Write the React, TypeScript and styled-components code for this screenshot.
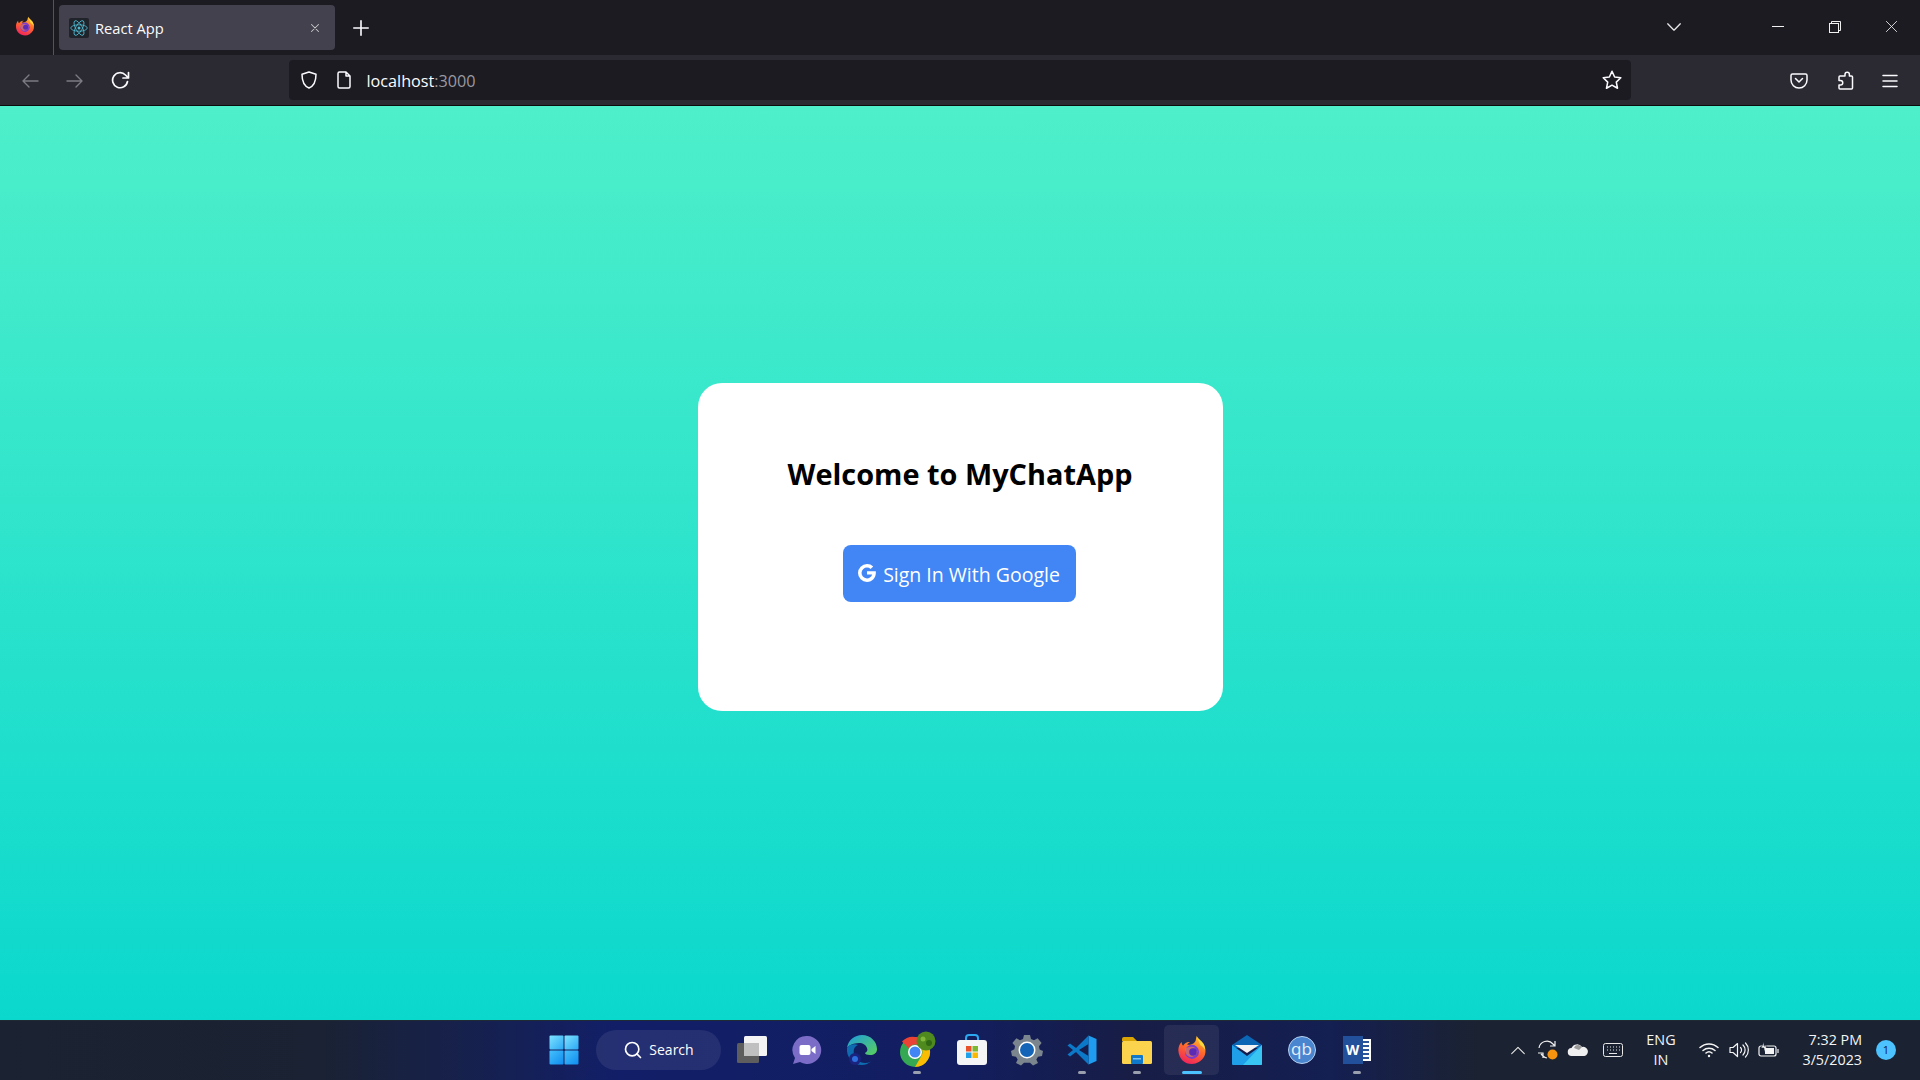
import React from 'react'
import styled, { createGlobalStyle } from 'styled-components'
import { Search } from 'lucide-react'

const GlobalStyle = createGlobalStyle`
  html, body { margin: 0; padding: 0; height: 100%; overflow: hidden; }
  body { font-family: 'Open Sans', 'Noto Sans', sans-serif; }
  #root { height: 100%; }
`

const Firefox = ({ size }: { size: number }) => (
  <svg width={size} height={size} viewBox="0 0 32 32">
    <defs>
      <linearGradient id={`ff${size}`} x1="0.7" y1="0" x2="0.3" y2="1">
        <stop offset="0" stopColor="#ffc22e" />
        <stop offset="0.45" stopColor="#ff6a2b" />
        <stop offset="1" stopColor="#f0225e" />
      </linearGradient>
    </defs>
    <path d="M21 1c1 3 5 5 7 8 3 5 3 10 1 14-3 5-8 8-13 8C8 31 2 25 1.500 17 1.300 13 3 9 5 7.500c0 2 .5 3 1.500 4C8 8.500 11 7 14 7.500c-2 1-3 2-3 3 3 0 8-1 9-5 .3-1.500.5-3 1-4.500z" fill={`url(#ff${size})`} />
    <path d="M21 1c1 3 5 5 7 8 1.500 2.500 2 5 2 7-1-2-3-4-5-5-1-3-3-6-4-10z" fill="#ffd93b" />
    <circle cx="16" cy="18" r="7.500" fill="#7a3bd1" />
    <path d="M8.500 15c3-3 9-3 11-1-3 0-5 1-5.500 2.500 2 2.500 6 2 8 0-.5 4-3.500 7-7 7-4 0-7-4-6.500-8.500z" fill="#ff8a2b" opacity="0.55" />
    <circle cx="17" cy="18" r="4" fill="#5b2bb5" />
  </svg>
)

const ReactLogo = () => (
  <ReactBox>
    <svg width="18" height="18" viewBox="-12 -12 24 24" fill="none" stroke="#4fb9d0" strokeWidth="1.100">
      <circle r="2" fill="#4fb9d0" stroke="none" />
      <ellipse rx="11" ry="4.300" />
      <ellipse rx="11" ry="4.300" transform="rotate(60)" />
      <ellipse rx="11" ry="4.300" transform="rotate(120)" />
    </svg>
  </ReactBox>
)

const Line = ({ d, w = 20, color = '#fbfbfe', sw = 1.800 }: { d: string; w?: number; color?: string; sw?: number }) => (
  <svg width={w} height={w} viewBox="0 0 20 20" fill="none" stroke={color} strokeWidth={sw} strokeLinecap="round" strokeLinejoin="round">
    <path d={d} />
  </svg>
)

const WindowsLogo = () => (
  <svg width="30" height="30" viewBox="0 0 30 30">
    <defs>
      <linearGradient id="winTop" x1="0" y1="0" x2="1" y2="1">
        <stop offset="0" stopColor="#7fe3ff" />
        <stop offset="1" stopColor="#2aa8f5" />
      </linearGradient>
      <linearGradient id="winBottom" x1="0" y1="0" x2="1" y2="1">
        <stop offset="0" stopColor="#45c0fb" />
        <stop offset="1" stopColor="#0f8cf0" />
      </linearGradient>
    </defs>
    <rect x="0.500" y="0.500" width="14" height="14" rx="1" fill="url(#winTop)" />
    <rect x="15.500" y="0.500" width="14" height="14" rx="1" fill="url(#winTop)" />
    <rect x="0.500" y="15.500" width="14" height="14" rx="1" fill="url(#winBottom)" />
    <rect x="15.500" y="15.500" width="14" height="14" rx="1" fill="url(#winBottom)" />
  </svg>
)

const TaskView = () => (
  <svg width="32" height="30" viewBox="0 0 32 30">
    <rect x="1" y="8" width="22" height="20" rx="1.500" fill="#5e5e5e" />
    <rect x="8" y="1" width="23" height="20" rx="1.500" fill="#f4f4f4" />
    <rect x="8" y="8" width="15" height="13" fill="#c0c0c0" />
  </svg>
)

const Teams = () => (
  <svg width="30" height="30" viewBox="0 0 30 30">
    <path d="M15 1a14 14 0 1 1-7 26L1 29l2-6A14 14 0 0 1 15 1z" fill="#7b6cc8" />
    <rect x="7.500" y="10" width="11" height="10" rx="2" fill="#fff" />
    <path d="M19.500 14l4-3v8l-4-3z" fill="#fff" />
  </svg>
)

const Edge = () => (
  <svg width="32" height="32" viewBox="0 0 32 32">
    <defs>
      <linearGradient id="edgeG" x1="0" y1="0" x2="1" y2="1">
        <stop offset="0" stopColor="#1d9ce0" />
        <stop offset="1" stopColor="#5ad05a" />
      </linearGradient>
    </defs>
    <path d="M1 14C2 6 9 1 16 1c9 0 15 7 15 14 0 4-3 6-7 6-3 0-5-1-5-2 2-1 3-3 2-5-1-3-4-5-8-5-6 0-11 3-12 5z" fill="url(#edgeG)" />
    <path d="M1 14c2-3 7-5 11-3-3 1-5 4-4 9 1 5 5 9 11 9 2 0 4-.5 6-1.500-3 2.500-6 3.500-9 3.500C7 31 0 23 1 14z" fill="#0f6bb0" />
    <circle cx="9" cy="25" r="6" fill="#1a237e" />
    <circle cx="9" cy="25" r="3" fill="#2d6fe0" />
  </svg>
)

const Chrome = () => (
  <svg width="38" height="38" viewBox="0 0 38 38">
    <circle cx="17" cy="21" r="15" fill="#34a853" />
    <path d="M17 6a15 15 0 0 1 13 7.500H17a7.500 7.500 0 0 0-6.500 3.800L4 10.500A15 15 0 0 1 17 6z" fill="#ea4335" />
    <path d="M30 13.500A15 15 0 0 1 17 36l6.500-11.200a7.500 7.500 0 0 0 0-7.500z" fill="#fbbc04" />
    <circle cx="17" cy="21" r="7" fill="#fff" />
    <circle cx="17" cy="21" r="5.500" fill="#4285f4" />
    <circle cx="28" cy="10" r="9.500" fill="#4f8a1e" />
    <circle cx="25" cy="8" r="2.500" fill="#7fb83a" />
    <circle cx="31" cy="12" r="3" fill="#2f6a12" />
  </svg>
)

const Store = () => (
  <svg width="30" height="32" viewBox="0 0 30 32">
    <path d="M9 7V4a3 3 0 0 1 3-3h6a3 3 0 0 1 3 3v3" fill="none" stroke="#2aa8f0" strokeWidth="2" />
    <rect x="0" y="6" width="30" height="25" rx="3" fill="#f5f5f5" />
    <rect x="9" y="12" width="5.500" height="5.500" fill="#e8502a" />
    <rect x="15.500" y="12" width="5.500" height="5.500" fill="#7cb82f" />
    <rect x="9" y="18.500" width="5.500" height="5.500" fill="#1fa0e8" />
    <rect x="15.500" y="18.500" width="5.500" height="5.500" fill="#fbb800" />
  </svg>
)

const Settings = () => (
  <svg width="32" height="32" viewBox="0 0 32 32">
    <path d="M13 1h6l1 4 3 1.300 3.600-2 4 4.700-2.600 3.300.6 3.200L32 17v0l-1 5-4 .7-1.700 2.800L27 29l-5 2.500-3-2.700h-6l-3 2.700L5 29l1.700-3.500L5 22.700 1 22l-1-5 3.400-1.700.6-3.200L1.400 9l4-4.700 3.600 2L12 5z" fill="#7b858e" />
    <circle cx="16" cy="16" r="8.500" fill="#fff" />
    <circle cx="16" cy="16" r="7" fill="#1465b8" />
  </svg>
)

const VSCode = () => (
  <svg width="30" height="30" viewBox="0 0 30 30">
    <path d="M21.500 0.500L29.500 4v22l-8 3.500z" fill="#1f9cf0" />
    <path d="M21.500 0.500L9 13 3 8.500.500 10.500 6 15 .500 19.500 3 21.500 9 17l12.500 12.500V21L12 15l9.500-6z" fill="#0b78c8" />
  </svg>
)

const Files = () => (
  <svg width="32" height="30" viewBox="0 0 32 30">
    <path d="M1 4a2 2 0 0 1 2-2h9l4 4H1z" fill="#d9a404" />
    <rect x="1" y="6" width="30" height="23" rx="1.500" fill="#fcd34d" />
    <rect x="10" y="20" width="12" height="9" rx="1" fill="#0f78c8" />
    <rect x="12" y="23" width="8" height="1.500" fill="#7fc4f0" />
  </svg>
)

const Mail = () => (
  <svg width="32" height="30" viewBox="0 0 32 30">
    <path d="M1 10L16 0l15 10v3H1z" fill="#0b66b5" />
    <path d="M4 10h24L16 18z" fill="#f4f4f4" />
    <path d="M1 10l15 11 15-11v19a1 1 0 0 1-1 1H2a1 1 0 0 1-1-1z" fill="#1e9fe8" />
    <path d="M31 10v19a1 1 0 0 1-1 1H12l19-20z" fill="#38c5f2" />
  </svg>
)

const QBittorrent = () => (
  <QbBadge>qb</QbBadge>
)

const Word = () => (
  <WordIcon>
    <WordPage>
      <WordLine />
      <WordLine />
      <WordLine />
      <WordLine />
      <WordLine />
    </WordPage>
    <WordMark>W</WordMark>
  </WordIcon>
)

const taskItems = [
  { key: 'tasks', icon: <TaskView /> },
  { key: 'teams', icon: <Teams /> },
  { key: 'edge', icon: <Edge /> },
  { key: 'chrome', icon: <Chrome />, running: true },
  { key: 'store', icon: <Store /> },
  { key: 'settings', icon: <Settings /> },
  { key: 'vscode', icon: <VSCode />, running: true },
  { key: 'files', icon: <Files />, running: true },
  { key: 'firefox', icon: <Firefox size={30} />, running: true, active: true },
  { key: 'mail', icon: <Mail /> },
  { key: 'qb', icon: <QBittorrent /> },
  { key: 'word', icon: <Word />, running: true },
]

export default function App() {
  return (
    <>
      <GlobalStyle />
      <Screen>
        <TabBar>
          <AppMenu>
            <Firefox size={20} />
          </AppMenu>
          <Tab>
            <ReactLogo />
            <TabTitle>React App</TabTitle>
            <TabClose>
              <Line d="M5 5l10 10M15 5L5 15" w={14} sw={1.500} color="#c8c8cc" />
            </TabClose>
          </Tab>
          <NewTab>
            <Line d="M10 2v16M2 10h16" w={18} sw={1.800} />
          </NewTab>
          <TabSpacer />
          <ListTabs>
            <Line d="M3 6.500l7 7 7-7" w={18} sw={1.500} color="#e6e6e6" />
          </ListTabs>
          <WinButton>
            <MinimizeGlyph />
          </WinButton>
          <WinButton>
            <svg width="12" height="12" viewBox="0 0 12 12" fill="none" stroke="#f0f0f0" strokeWidth="1">
              <rect x="0.500" y="2.500" width="9" height="9" fill="#1c1b22" />
              <path d="M2.500 2.500V0.500h9v9H9.500" />
            </svg>
          </WinButton>
          <WinButton>
            <Line d="M4 4l12 12M16 4L4 16" w={17} sw={1} color="#f0f0f0" />
          </WinButton>
        </TabBar>
        <NavBar>
          <NavIcon>
            <Line d="M18 10H3M9 4l-6 6 6 6" sw={1.400} color="#7c7b84" />
          </NavIcon>
          <NavIcon>
            <Line d="M2 10h15M11 4l6 6-6 6" sw={1.400} color="#7c7b84" />
          </NavIcon>
          <NavIcon>
            <Line d="M16.500 10.500A7.500 7.500 0 1 1 14.500 4L17 6.500M17.500 1.500v5.500H12" sw={1.700} />
          </NavIcon>
          <UrlBar>
            <UrlIcon>
              <Line d="M10 2l7 2.200c0 7-1.500 11.500-7 13.800C4.500 15.700 3 11.200 3 4.200z" sw={1.500} />
            </UrlIcon>
            <UrlIcon>
              <Line d="M4 3.500A1.500 1.500 0 0 1 5.500 2H12l4 4v10.500a1.500 1.500 0 0 1-1.500 1.500h-9A1.500 1.500 0 0 1 4 16.500zM12 2v4h4" sw={1.500} />
            </UrlIcon>
            <UrlText>
              localhost<UrlPort>:3000</UrlPort>
            </UrlText>
            <Star>
              <Line d="M10 2l2.400 5.300 5.600.7-4.100 3.900 1.100 5.600-5-2.800-5 2.800 1.100-5.600L2 8l5.600-.7z" w={22} sw={1.400} />
            </Star>
          </UrlBar>
          <NavRight>
            <NavIcon>
              <Line d="M3.500 3h13A1.500 1.500 0 0 1 18 4.500V9a8 8 0 0 1-16 0V4.500A1.500 1.500 0 0 1 3.500 3zM6.500 7.500L10 11l3.500-3.500" w={20} sw={1.500} />
            </NavIcon>
            <NavIcon>
              <Line d="M8 5h2V3.500a2.200 2.200 0 0 1 4.400 0V5h2.100a1 1 0 0 1 1 1v11a1 1 0 0 1-1 1H5a1 1 0 0 1-1-1v-3h1.500a2 2 0 0 0 0-4.500H4V6a1 1 0 0 1 1-1z" w={20} sw={1.500} />
            </NavIcon>
            <NavIcon>
              <Line d="M3 4.500h14M3 10h14M3 15.500h14" w={20} sw={1.500} />
            </NavIcon>
          </NavRight>
        </NavBar>
        <Page>
          <Card>
            <Heading>Welcome to MyChatApp</Heading>
            <GoogleButton>
              <svg width="18" height="18" viewBox="0 0 18 18">
                <path d="M9 0a9 9 0 0 1 6.200 2.400l-2.600 2.500A5.400 5.400 0 0 0 9 3.600 5.400 5.400 0 1 0 14.200 10.400H9V7.300h8.800c.6 5.800-3 10.700-8.800 10.700A9 9 0 0 1 9 0z" fill="#fff" />
              </svg>
              <ButtonLabel>Sign In With Google</ButtonLabel>
            </GoogleButton>
          </Card>
        </Page>
        <Taskbar>
          <span />
          <TaskGroup>
            <TaskSlot>
              <WindowsLogo />
            </TaskSlot>
            <SearchPill>
              <Search size={20} color="#fff" strokeWidth={2} />
              Search
            </SearchPill>
            {taskItems.map((item) => (
              <TaskSlot
                key={item.key}
                $active={item.active}
              >
                {item.icon}
                {item.running && <RunDot $active={item.active} />}
              </TaskSlot>
            ))}
          </TaskGroup>
          <Tray>
            <TrayIcon>
              <Line d="M3 14l7-7 7 7" w={18} sw={1.200} color="#e8e8e8" />
            </TrayIcon>
            <TrayIcon>
              <svg width="22" height="22" viewBox="0 0 22 22" fill="none" stroke="#f0f0f0" strokeWidth="1.200">
                <path d="M2 9a8 8 0 0 1 14-4l2 2M18 2v5h-5M4 15l2 2a8 8 0 0 0 4 2M1 14h5v5" />
                <circle cx="15.500" cy="15.500" r="5" fill="#f7930e" stroke="none" />
              </svg>
            </TrayIcon>
            <TrayIcon>
              <svg width="22" height="14" viewBox="0 0 22 14">
                <path d="M5 13a4 4 0 0 1-.5-8A6 6 0 0 1 15 4a4.500 4.500 0 0 1 2.500 9z" fill="#f0f0f0" />
                <path d="M8 3a5 5 0 0 1 7 1l-3 3-5-2z" fill="#9a9a9a" />
              </svg>
            </TrayIcon>
            <KeyboardIcon>
              <svg width="20" height="14" viewBox="0 0 20 14" fill="none" stroke="#e8e8e8" strokeWidth="1">
                <rect x="0.500" y="0.500" width="19" height="13" rx="2" />
                <path d="M4 4h1M7 4h1M10 4h1M13 4h1M16 4h1M4 7h1M7 7h1M10 7h1M13 7h1M16 7h1M6 10.500h8" />
              </svg>
            </KeyboardIcon>
            <Lang>
              <span>ENG</span>
              <span>IN</span>
            </Lang>
            <TrayIcon>
              <svg width="20" height="16" viewBox="0 0 20 16" fill="none" stroke="#f4f4f4" strokeWidth="1.500" strokeLinecap="round">
                <path d="M1 5.500a13 13 0 0 1 18 0M4 8.500a9 9 0 0 1 12 0M7 11a4.500 4.500 0 0 1 6 0" />
                <circle cx="10" cy="14" r="1.200" fill="#f4f4f4" stroke="none" />
              </svg>
            </TrayIcon>
            <TrayIcon>
              <svg width="20" height="18" viewBox="0 0 20 18" fill="none" stroke="#f4f4f4" strokeWidth="1.200" strokeLinecap="round" strokeLinejoin="round">
                <path d="M1 6.500v5h3l4.500 4v-13L4 6.500zM11.500 6.500a3.500 3.500 0 0 1 0 5M14 4a7 7 0 0 1 0 10M16.500 2a10 10 0 0 1 0 14" />
              </svg>
            </TrayIcon>
            <TrayIcon>
              <svg width="22" height="18" viewBox="0 0 22 18" fill="none" stroke="#f4f4f4" strokeWidth="1.200">
                <rect x="1" y="5" width="17" height="10" rx="2" />
                <path d="M20 8v4" />
                <path d="M3 7l3-6v4h3l-3 6V7z" fill="#f4f4f4" stroke="#1b2231" strokeWidth="0.600" />
                <rect x="7" y="7" width="9" height="6" fill="#f4f4f4" stroke="none" />
              </svg>
            </TrayIcon>
            <Clock>
              <span>7:32 PM</span>
              <span>3/5/2023</span>
            </Clock>
            <Notify>1</Notify>
          </Tray>
        </Taskbar>
      </Screen>
    </>
  )
}

const Screen = styled.div`
  display: flex;
  flex-direction: column;
  height: 100vh;
  width: 100vw;
`

const TabBar = styled.div`
  display: flex;
  align-items: center;
  height: 55px;
  background: #1c1b22;
  flex-shrink: 0;
`

const AppMenu = styled.div`
  display: flex;
  align-items: center;
  justify-content: center;
  width: 54px;
  height: 55px;
  padding: 0 3px 3px 0;
  border-right: 1px solid #55545c;
  box-sizing: border-box;
`

const Tab = styled.div`
  display: flex;
  align-items: center;
  width: 276px;
  height: 45px;
  margin-left: 5px;
  padding: 0 10px;
  box-sizing: border-box;
  background: #42414d;
  border-radius: 4px;
`

const ReactBox = styled.div`
  display: flex;
  align-items: center;
  justify-content: center;
  width: 20px;
  height: 20px;
  background: #20232a;
  border-radius: 2px;
  flex-shrink: 0;
`

const TabTitle = styled.span`
  margin: 0 0 0 6px;
  color: #fbfbfe;
  font-size: 14.700px;
  flex: 1;
`

const TabClose = styled.div`
  display: flex;
  margin-right: 3px;
`

const NewTab = styled.div`
  display: flex;
  margin-left: 17px;
`

const TabSpacer = styled.div`
  flex: 1;
`

const ListTabs = styled.div`
  display: flex;
  margin-right: 66px;
  margin-top: -2px;
`

const WinButton = styled.div`
  display: flex;
  align-items: center;
  justify-content: center;
  width: 57px;
  height: 55px;
  padding-bottom: 2px;
  box-sizing: border-box;
`

const MinimizeGlyph = styled.div`
  width: 12px;
  height: 1px;
  background: #f0f0f0;
`

const NavBar = styled.div`
  display: flex;
  align-items: center;
  height: 51px;
  padding-left: 7px;
  box-sizing: border-box;
  background: #2b2a33;
  border-bottom: 1px solid #0c0c0d;
  flex-shrink: 0;
`

const NavIcon = styled.div`
  display: flex;
  align-items: center;
  justify-content: center;
  width: 45.500px;
  height: 40px;
  padding-top: 2px;
  box-sizing: border-box;
`

const UrlBar = styled.div`
  display: flex;
  align-items: center;
  width: 1342px;
  height: 40px;
  margin-left: 145px;
  padding: 0 8px 0 10px;
  box-sizing: border-box;
  background: #1c1b22;
  border-radius: 4px;
`

const UrlIcon = styled.div`
  display: flex;
  width: 20px;
  margin-right: 15px;
`

const UrlText = styled.span`
  color: #fbfbfe;
  font-size: 16.200px;
  margin: 2px 0 0 -2px;
`

const UrlPort = styled.span`
  color: #9a9aa0;
`

const Star = styled.div`
  display: flex;
  margin-left: auto;
`

const NavRight = styled.div`
  display: flex;
  margin-left: auto;
  margin-right: 7px;
`

const Page = styled.main`
  flex: 1;
  display: flex;
  align-items: center;
  justify-content: center;
  padding-bottom: 33px;
  box-sizing: border-box;
  background: linear-gradient(to bottom, #4eefca, #0bd8cd);
`

const Card = styled.section`
  display: flex;
  flex-direction: column;
  align-items: center;
  width: 525px;
  height: 328px;
  padding-top: 68px;
  box-sizing: border-box;
  background: #fff;
  border-radius: 24px;
`

const Heading = styled.h1`
  margin: 0;
  color: #000;
  font-size: 28.900px;
  font-weight: 700;
  line-height: 46px;
`

const GoogleButton = styled.button`
  display: flex;
  align-items: center;
  justify-content: center;
  gap: 7px;
  width: 233px;
  height: 57px;
  margin: 48px 2px 0 0;
  padding: 0;
  border: none;
  border-radius: 8px;
  background: #4285f4;
  color: #fff;
  font-family: inherit;
  font-size: 19.500px;
`

const ButtonLabel = styled.span`
  margin-top: 2px;
`

const Taskbar = styled.footer`
  display: grid;
  grid-template-columns: 1fr auto 1fr;
  align-items: center;
  height: 60px;
  padding-bottom: 2px;
  background: linear-gradient(
    to right,
    #1b2231 0,
    #1a2233 320px,
    #121f68 620px,
    #121e60 950px,
    #171d45 1130px,
    #141f52 1330px,
    #1b2231 1480px
  );
  border-top: 1px solid #1f2a33;
  box-sizing: border-box;
  flex-shrink: 0;
`

const TaskGroup = styled.div`
  display: flex;
  align-items: center;
`

const TaskSlot = styled.div<{ $active?: boolean }>`
  position: relative;
  display: flex;
  align-items: center;
  justify-content: center;
  width: 55px;
  height: 50px;
  box-sizing: border-box;
  border-radius: 5px;
  background: ${(p) => (p.$active ? 'rgba(255, 255, 255, 0.07)' : 'transparent')};
`

const RunDot = styled.span<{ $active?: boolean }>`
  position: absolute;
  bottom: 1px;
  left: 50%;
  width: ${(p) => (p.$active ? 20 : 8)}px;
  height: 3px;
  transform: translateX(-50%);
  border-radius: 2px;
  background: ${(p) => (p.$active ? '#4cc2ff' : '#9a9fae')};
`

const SearchPill = styled.div`
  display: flex;
  align-items: center;
  justify-content: center;
  gap: 6px;
  width: 125px;
  height: 40px;
  margin: 0 3px 0 5px;
  border-radius: 20px;
  background: rgba(255, 255, 255, 0.08);
  color: #fff;
  font-size: 14px;
`

const QbBadge = styled.div`
  display: flex;
  align-items: center;
  justify-content: center;
  width: 28px;
  height: 28px;
  border-radius: 50%;
  border: 1px solid #b5d0ef;
  background: #4a86cf;
  color: #e8f0fa;
  font-size: 17px;
  line-height: 1;
  padding-bottom: 3px;
  box-sizing: border-box;
`

const WordIcon = styled.div`
  position: relative;
  width: 28px;
  height: 28px;
`

const WordPage = styled.div`
  position: absolute;
  top: 3px;
  right: 0;
  width: 19px;
  height: 22px;
  display: flex;
  flex-direction: column;
  align-items: flex-end;
  justify-content: center;
  gap: 2px;
  padding-right: 2px;
  box-sizing: border-box;
  background: #fff;
`

const WordLine = styled.span`
  width: 9px;
  height: 2px;
  background: #2b579a;
`

const WordMark = styled.div`
  position: absolute;
  left: 0;
  top: 0;
  width: 20px;
  height: 28px;
  display: flex;
  align-items: center;
  justify-content: center;
  background: #23509a;
  color: #fff;
  font-size: 14px;
  font-weight: 700;
`

const Tray = styled.div`
  display: flex;
  align-items: center;
  justify-content: flex-end;
  padding-right: 24px;
`

const TrayIcon = styled.div`
  display: flex;
  align-items: center;
  justify-content: center;
  width: 30px;
  height: 30px;
`

const KeyboardIcon = styled(TrayIcon)`
  width: 40px;
`

const Lang = styled.div`
  display: flex;
  flex-direction: column;
  align-items: center;
  width: 55px;
  margin: 0 6px 0 0;
  color: #f4f4f4;
  font-size: 14.400px;
  line-height: 20px;
`

const Clock = styled.div`
  display: flex;
  flex-direction: column;
  align-items: flex-end;
  margin-left: 18px;
  color: #f4f4f4;
  font-size: 14.300px;
  line-height: 20px;
`

const Notify = styled.div`
  display: flex;
  align-items: center;
  justify-content: center;
  width: 20px;
  height: 20px;
  margin-left: 14px;
  border-radius: 50%;
  background: #4cc2ff;
  color: #12202e;
  font-size: 11px;
`
